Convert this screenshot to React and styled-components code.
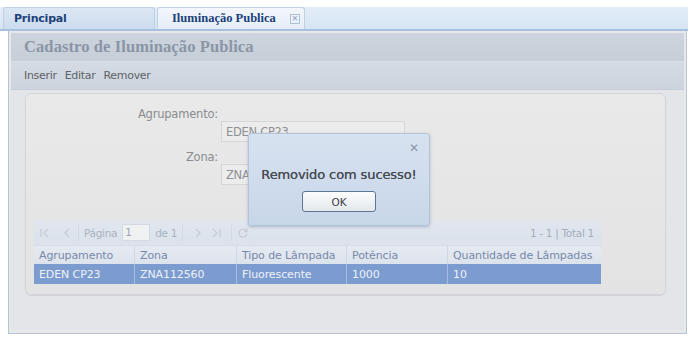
import React from "react";
import styled, { createGlobalStyle } from "styled-components";

const Global = createGlobalStyle`
  html, body { margin: 0; padding: 0; background: #ffffff; }
  body { font-family: "DejaVu Sans", "Liberation Sans", sans-serif; }
  * { box-sizing: border-box; }
`;

const Page = styled.div`
  width: 693px;
  height: 340px;
  padding-top: 7px;
  position: relative;
  overflow: hidden;
`;

const TabBar = styled.div`
  display: flex;
  align-items: flex-end;
  gap: 2px;
  height: 24px;
  padding-left: 3px;
  margin-right: 5px;
  background: linear-gradient(#e3edf8, #d6e4f3);
  border-bottom: 2px solid #a7c0dd;
`;

const Tab = styled.div`
  display: flex;
  align-items: center;
  gap: 14px;
  height: 22px;
  width: ${(p) => p.$w}px;
  padding-left: ${(p) => p.$pl}px;
  border: 1px solid #bfd0e4;
  border-bottom: none;
  border-radius: 3px 3px 0 0;
  background: ${(p) => (p.$active ? "linear-gradient(#f3f7fc, #e4edf8)" : "linear-gradient(#dce7f4, #ccdcee)")};
  color: #203f78;
  font-family: ${(p) => (p.$serif ? '"Liberation Serif", "DejaVu Serif", serif' : '"DejaVu Sans", sans-serif')};
  font-weight: bold;
  font-size: ${(p) => (p.$serif ? "12.5px" : "11px")};
  letter-spacing: ${(p) => (p.$serif ? "0px" : "-0.2px")};
  white-space: nowrap;
`;

const TabClose = styled.span`
  display: inline-flex;
  align-items: center;
  justify-content: center;
  width: 10px;
  height: 10px;
  border: 1px solid #aebfd6;
  color: #8ea3c2;
  font-size: 8px;
  font-family: "DejaVu Sans", sans-serif;
  font-weight: normal;
  line-height: 1;
`;

const Panel = styled.div`
  margin: 0 6px 0 8px;
  height: 303px;
  border: 1px solid #b7c4d4;
  border-top: none;
  background: #e7e8ea;
  display: flex;
  flex-direction: column;
  padding: 2px 2px 3px 2px;
`;

const TitleBar = styled.div`
  height: 29px;
  display: flex;
  align-items: center;
  padding-left: 13px;
  background: linear-gradient(#cdd4dd, #c6ced8);
  color: #8a95a6;
  font-family: "Liberation Serif", "DejaVu Serif", serif;
  font-weight: bold;
  font-size: 16.5px;
  letter-spacing: 0.1px;
  border-bottom: 1px solid #d8dee6;
`;

const Toolbar = styled.div`
  height: 28px;
  display: flex;
  align-items: center;
  gap: 8px;
  padding-left: 13px;
  background: linear-gradient(#d5dbe3, #cdd4dd);
  border-bottom: 1px solid #c3ccd8;
  color: #5d6269;
  font-size: 11px;
  letter-spacing: -0.3px;
`;

const Body = styled.div`
  flex: 1;
  padding: 3px 18px 0 14px;
  background: #e3e5e8;
`;

const FormPanel = styled.div`
  height: 202px;
  border: 1px solid #d3d5d8;
  border-radius: 6px;
  background: linear-gradient(#e9e9e9, #e3e3e3);
  padding: 13px 0 0 8px;
  box-shadow: 0 1px 1px #cfd2d6;
`;

const Field = styled.div`
  display: flex;
  flex-direction: column;
  margin-bottom: ${(p) => p.$mb}px;
`;

const Label = styled.div`
  width: 184px;
  text-align: right;
  color: #8a8c8f;
  font-size: 11.5px;
  height: 14px;
  line-height: 15px;
  letter-spacing: -0.2px;
`;

const Input = styled.div`
  margin: 0 0 0 187px;
  width: 184px;
  height: 21px;
  border: 1px solid #d5d6d8;
  background: #ececec;
  color: #8e9094;
  font-size: 11.5px;
  padding: 3px 0 0 4px;
  letter-spacing: -0.3px;
`;

const Grid = styled.div`
  width: 567px;
  margin-top: ${(p) => p.$mt}px;
`;

const Pager = styled.div`
  height: 25px;
  display: flex;
  align-items: center;
  gap: 5px;
  padding: 0 7px 0 5px;
  background: linear-gradient(#e1e6ee, #dbe2eb);
  color: #a9b3c1;
  font-size: 10.5px;
  letter-spacing: -0.3px;
`;

const PagerIcons = styled.div`
  display: flex;
  align-items: center;
  gap: ${(p) => p.$gap}px;
  margin: 0 ${(p) => p.$mx}px;
`;

const PagerInput = styled.div`
  width: 28px;
  height: 17px;
  border: 1px solid #d4dae3;
  background: #f0f1f3;
  color: #9ea5b0;
  padding: 1px 0 0 2px;
`;

const PagerSep = styled.div`
  width: 1px;
  height: 16px;
  background: #d3d9e2;
`;

const PagerInfo = styled.div`
  margin-left: auto;
  color: #a3adbc;
`;

const Row = styled.div`
  display: grid;
  grid-template-columns: 101px 102px 110px 101px 1fr;
  height: ${(p) => p.$h}px;
  background: ${(p) => p.$bg};
  border-top: ${(p) => (p.$top ? "1px solid #d6dde7" : "none")};
`;

const Cell = styled.div`
  display: flex;
  align-items: center;
  padding-left: 5px;
  font-size: 11px;
  color: ${(p) => p.$c};
  border-right: 1px solid ${(p) => p.$line};
  letter-spacing: -0.1px;
  white-space: nowrap;
  &:last-child { border-right: none; }
`;

const Dialog = styled.div`
  position: absolute;
  left: 248px;
  top: 133px;
  width: 182px;
  height: 93px;
  border: 1px solid #b3c3d8;
  border-radius: 3px;
  background: linear-gradient(#d7e2f0, #c8d6e9);
  box-shadow: 0 1px 3px rgba(120, 140, 170, 0.5);
  display: flex;
  flex-direction: column;
  align-items: center;
`;

const DialogClose = styled.div`
  align-self: flex-end;
  margin: 8px 10px 0 0;
  color: #8c98a8;
  font-size: 12px;
  line-height: 1;
`;

const DialogText = styled.div`
  margin-top: 13px;
  color: #474c54;
  font-size: 13px;
  font-weight: 500;
  letter-spacing: -0.1px;
  text-shadow: 0 0 0.4px #474c54;
`;

const OkButton = styled.div`
  margin-top: 9px;
  width: 74px;
  height: 21px;
  border: 1px solid #5f7594;
  border-radius: 3px;
  background: linear-gradient(#fbfcfd, #e4e8ee);
  display: flex;
  align-items: center;
  justify-content: center;
  color: #3d4148;
  font-size: 10.5px;
`;

const Ico = ({ d }) => (
  <svg width="12" height="12" viewBox="0 0 12 12">
    <path d={d} fill="none" stroke="#c6ccd5" strokeWidth="1.3" />
  </svg>
);

export default function App() {
  const headLine = "#cfd7e3";
  const rowLine = "#a7bce0";
  return (
    <>
      <Global />
      <Page>
        <TabBar>
          <Tab $w={152} $pl={10}>Principal</Tab>
          <Tab $w={148} $pl={14} $active $serif>
            Iluminação Publica <TabClose>✕</TabClose>
          </Tab>
        </TabBar>
        <Panel>
          <TitleBar>Cadastro de Iluminação Publica</TitleBar>
          <Toolbar>
            <span>Inserir</span>
            <span>Editar</span>
            <span>Remover</span>
          </Toolbar>
          <Body>
            <FormPanel>
              <Field $mb={8}>
                <Label>Agrupamento:</Label>
                <Input>EDEN CP23</Input>
              </Field>
              <Field $mb={0}>
                <Label>Zona:</Label>
                <Input>ZNA112560</Input>
              </Field>
              <Grid $mt={35}>
                <Pager>
                  <PagerIcons $gap={10} $mx={0}>
                    <Ico d="M2 2v8M9 2L5 6l4 4" />
                    <Ico d="M8 2L4 6l4 4" />
                  </PagerIcons>
                  <PagerSep />
                  <span>Página</span>
                  <PagerInput>1</PagerInput>
                  <span>de 1</span>
                  <PagerSep />
                  <PagerIcons $gap={6} $mx={4}>
                    <Ico d="M4 2l4 4-4 4" />
                    <Ico d="M3 2l4 4-4 4M10 2v8" />
                  </PagerIcons>
                  <PagerSep />
                  <Ico d="M9.5 4A4 4 0 1 0 10 7M10 1.5V4.5H7" />
                  <PagerInfo>1 - 1 | Total 1</PagerInfo>
                </Pager>
                <Row $h={19} $bg="linear-gradient(#e5eaf1, #dde3ec)" $top>
                  {["Agrupamento", "Zona", "Tipo de Lâmpada", "Potência", "Quantidade de Lâmpadas"].map((t) => (
                    <Cell key={t} $c="#7789aa" $line={headLine}>{t}</Cell>
                  ))}
                </Row>
                <Row $h={20} $bg="#7c9bcf">
                  {["EDEN CP23", "ZNA112560", "Fluorescente", "1000", "10"].map((t) => (
                    <Cell key={t} $c="#eef2f9" $line={rowLine}>{t}</Cell>
                  ))}
                </Row>
              </Grid>
            </FormPanel>
          </Body>
        </Panel>
        <Dialog>
          <DialogClose>✕</DialogClose>
          <DialogText>Removido com sucesso!</DialogText>
          <OkButton>OK</OkButton>
        </Dialog>
      </Page>
    </>
  );
}
